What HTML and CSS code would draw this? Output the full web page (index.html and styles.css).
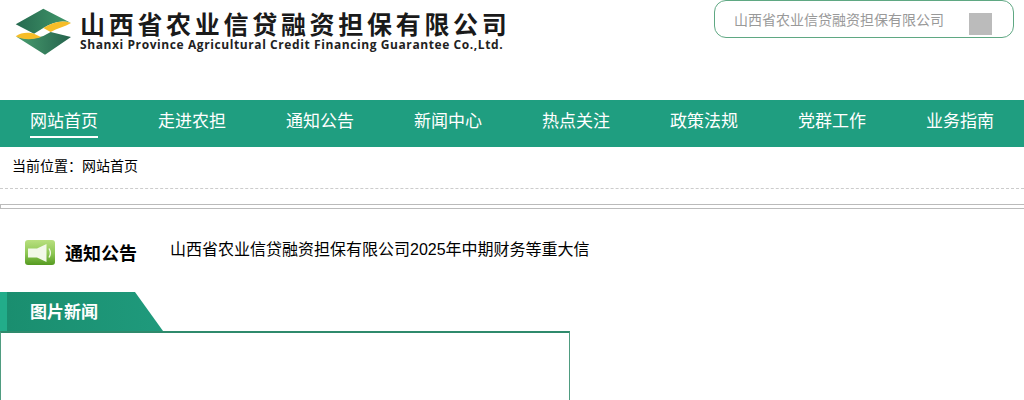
FILE: index.html
```html
<!DOCTYPE html>
<html lang="zh-CN">
<head>
<meta charset="utf-8">
<title>山西省农业信贷融资担保有限公司</title>
<link rel="stylesheet" href="styles.css">
</head>
<body>
<header class="top">
  <div class="brand">
    <svg class="logo" width="58" height="48" viewBox="0 0 58 48" aria-hidden="true">
      <defs>
        <linearGradient id="lg" x1="0" y1="0" x2="1" y2="0">
          <stop offset="0" stop-color="#26694f"/>
          <stop offset="1" stop-color="#429a6c"/>
        </linearGradient>
        <linearGradient id="lg2" x1="0" y1="0" x2="1" y2="0">
          <stop offset="0" stop-color="#4a9f70"/>
          <stop offset="1" stop-color="#24624c"/>
        </linearGradient>
      </defs>
      <path fill="url(#lg)" d="M.7 16.3 28.3.7 56 15C47 12 38 14 28.3 20L19 25.7Z"/>
      <path fill="#f6bd28" d="M56 15C47 12 38 14 28.3 20L35.7 24C42 20 50 19 56 15Z"/>
      <path fill="url(#lg2)" d="M.7 28.3C10 32 20 31 28.3 28L35.7 24 56 29 30 46.7Z"/>
      <path fill="#f6bd28" d="M.7 28.3C6 24 14 24 19 25.7L26 29C18 32 8 32 .7 28.3Z"/>
    </svg>
    <div class="brand-text">
      <div class="brand-cn">山西省农业信贷融资担保有限公司</div>
      <div class="brand-en">Shanxi Province Agricultural Credit Financing Guarantee Co.,Ltd.</div>
    </div>
  </div>
  <div class="search">
    <span class="search-text">山西省农业信贷融资担保有限公司</span>
    <span class="search-btn"></span>
  </div>
</header>
<nav class="nav">
  <a class="nav-item active">网站首页</a>
  <a class="nav-item">走进农担</a>
  <a class="nav-item">通知公告</a>
  <a class="nav-item">新闻中心</a>
  <a class="nav-item">热点关注</a>
  <a class="nav-item">政策法规</a>
  <a class="nav-item">党群工作</a>
  <a class="nav-item">业务指南</a>
</nav>
<div class="crumb">当前位置：网站首页</div>
<div class="rule-box"></div>
<section class="notice">
  <svg class="notice-icon" width="30" height="25" viewBox="0 0 30 25" aria-hidden="true">
    <defs>
      <linearGradient id="ng" x1="0" y1="0" x2="0" y2="1">
        <stop offset="0" stop-color="#b9e07f"/>
        <stop offset=".55" stop-color="#8cc653"/>
        <stop offset="1" stop-color="#559a20"/>
      </linearGradient>
    </defs>
    <rect width="30" height="25" rx="3" fill="url(#ng)"/>
    <path fill="#f2f9e8" d="M3 8.5h9L21.5 4v18L12 17.500H3z"/>
    <path fill="none" stroke="#f2f9e8" stroke-width="1.3" d="M24 8.500c1.700 2.800 1.700 6.200 0 9"/>
  </svg>
  <h2 class="notice-title">通知公告</h2>
  <div class="notice-text">山西省农业信贷融资担保有限公司2025年中期财务等重大信</div>
</section>
<section class="news">
  <div class="tab"><span class="tab-label">图片新闻</span></div>
  <div class="news-box"></div>
</section>
</body>
</html>
```

FILE: styles.css
```css
* { box-sizing: border-box; }
html, body { margin: 0; padding: 0; height: 400px; overflow: hidden; background: #fff; }
body { font-family: "Liberation Sans", "Noto Sans CJK SC", sans-serif; color: #000; }

.top { height: 100px; display: flex; justify-content: space-between; align-items: flex-start; padding: 0 10px 0 15px; }
.brand { display: flex; gap: 7px; padding-top: 8px; }
.logo { display: block; }
.brand-text { width: 426px; }
.brand-cn { font-family: "Noto Sans CJK SC", sans-serif; font-weight: 700; font-size: 25px; line-height: 30px; letter-spacing: 3.7px; color: #1a1a1a; white-space: nowrap; }
.brand-en { font-family: "Open Sans", sans-serif; font-weight: 700; font-size: 12px; line-height: 14px; letter-spacing: .59px; color: #222; white-space: nowrap; }

.search { width: 300px; height: 38px; border: 1px solid #5fa883; border-radius: 12px; display: flex; align-items: center; padding-left: 19px; }
.search-text { font-size: 14px; color: #999; width: 235px; white-space: nowrap; }
.search-btn { width: 23px; height: 22px; background: #bbb; margin-top: 10px; }

.nav { height: 47px; background: #1f9e80; display: flex; }
.nav-item { padding: 0 30px; color: #fff; font-size: 17px; line-height: 44px; flex: none; height: 47px; }
.nav-item.active { position: relative; }
.nav-item.active::after { content: ""; position: absolute; left: 30px; right: 30px; top: 36px; height: 2px; background: #fff; }

.crumb { height: 42px; padding: 10px 0 0 12px; font-size: 14px; line-height: 18px; border-bottom: 1px dashed #ccc; }
.rule-box { height: 5px; margin-top: 15px; border: 1px solid #bbb; border-right: 0; }

.notice { display: flex; align-items: flex-start; height: 83px; padding: 31px 0 0 25px; }
.notice-icon { display: block; flex: none; }
.notice-title { margin: 1px 0 0 10px; width: 105px; font-size: 18px; line-height: 26px; font-weight: 700; flex: none; }
.notice-text { font-size: 16px; line-height: 20px; white-space: nowrap; }

.tab { width: 163px; height: 39px; background: linear-gradient(90deg, #22ad8a 0, #22ad8a 7px, #1a8e6f 7px, #1f9a7c 100%); clip-path: polygon(0 0, 135px 0, 163px 39px, 0 39px); padding-left: 30px; }
.tab-label { color: #fff; font-size: 17px; font-weight: 700; line-height: 41px; }
.news-box { width: 570px; height: 69px; border: 1px solid #4f9c80; border-top: 2px solid #2f8a6c; border-bottom: 0; }
```
